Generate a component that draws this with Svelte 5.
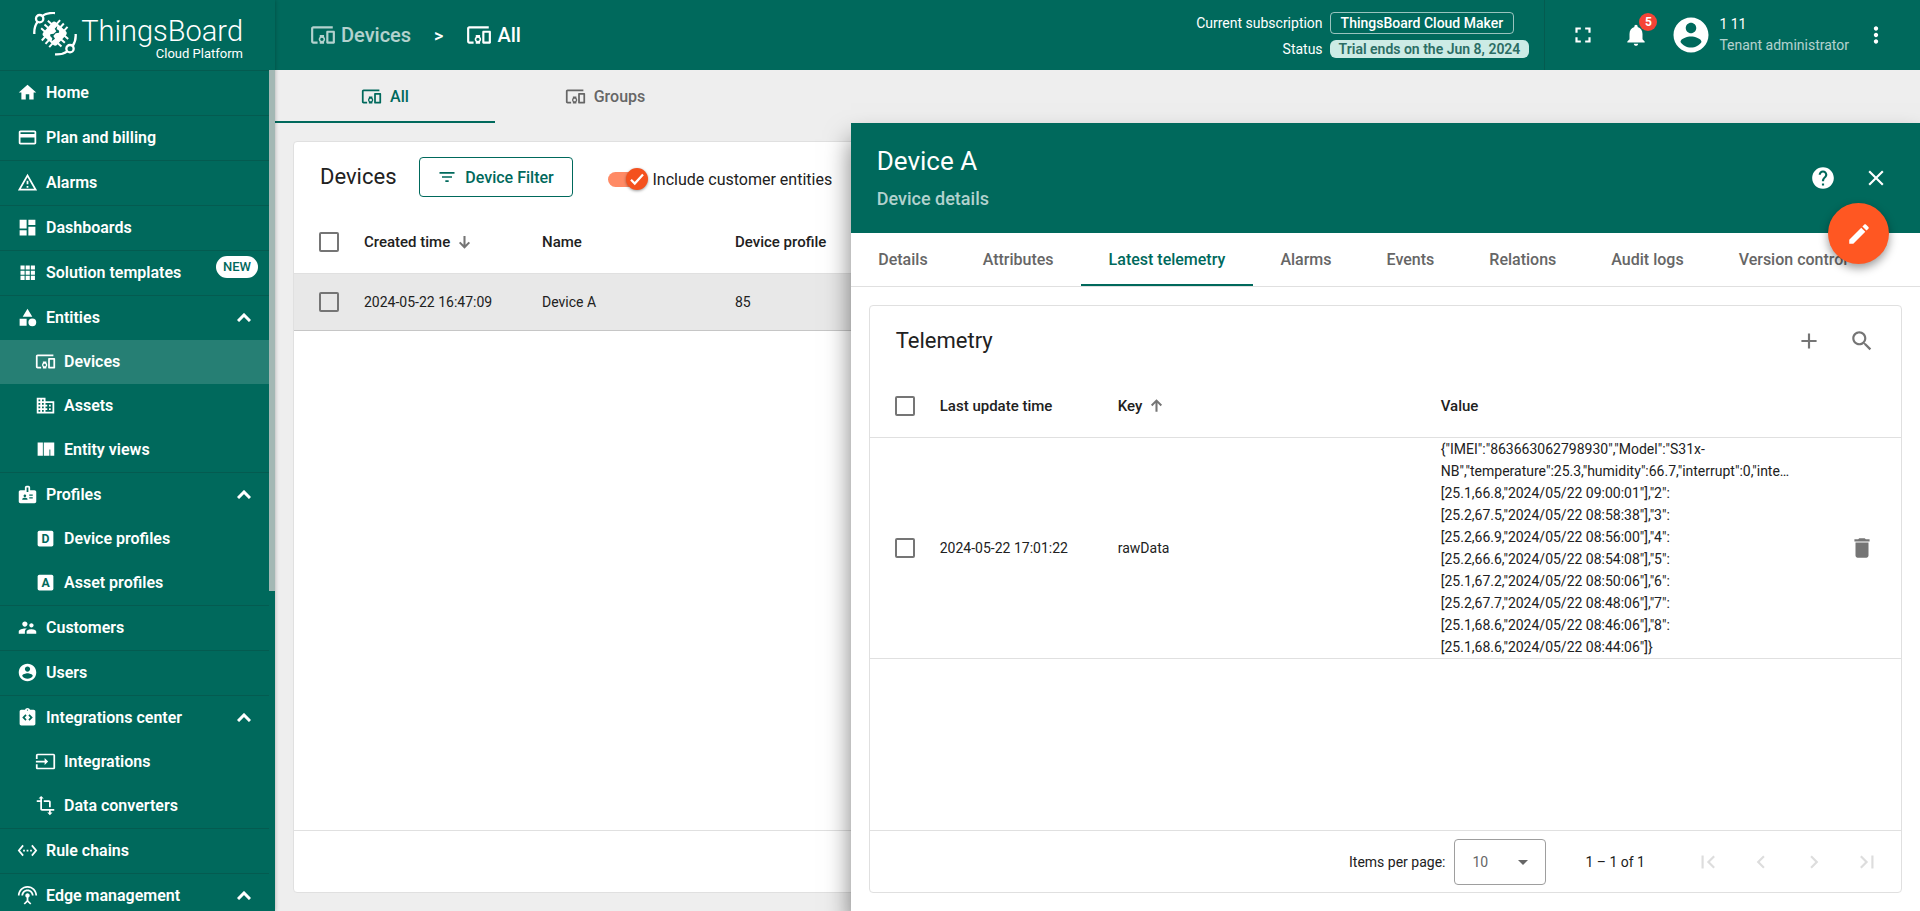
<script>
	const icons = {
		home: 'M10 20v-6h4v6h5v-8h3L12 3 2 12h3v8z',
		card: 'M20 4H4c-1.11 0-1.99.89-1.99 2L2 18c0 1.11.89 2 2 2h16c1.11 0 2-.89 2-2V6c0-1.11-.89-2-2-2zm0 14H4v-6h16v6zm0-10H4V6h16v2z',
		alarm: 'M12 2L1 21h22M12 6l7.53 13H4.47M11 10v4h2v-4m-2 6v2h2v-2',
		dashboard: 'M3 13h8V3H3v10zm0 8h8v-6H3v6zm10 0h8V11h-8v10zm0-18v6h8V3h-8z',
		apps: 'M4 4h4.7v4.7H4zM9.9 4h4.7v4.7H9.9zM15.8 4h4.7v4.7h-4.7zM4 9.9h4.7v4.7H4zM9.9 9.9h4.7v4.7H9.9zM15.8 9.9h4.7v4.7h-4.7zM4 15.8h4.7v4.7H4zM9.9 15.8h4.7v4.7H9.9zM15.8 15.8h4.7v4.7h-4.7z',
		category: 'M12 2l-5.5 9h11zM17.5 13a4.5 4.5 0 1 0 0 9 4.5 4.5 0 0 0 0-9zM3 13.5h8v8H3z',
		devices: 'M3 6h18V4H3c-1.1 0-2 .9-2 2v12c0 1.1.9 2 2 2h4v-2H3V6zm10 6H9v1.78c-.61.55-1 1.33-1 2.22s.39 1.67 1 2.22V20h4v-1.78c.61-.55 1-1.34 1-2.22s-.39-1.67-1-2.22V12zm-2 5.5c-.83 0-1.5-.67-1.5-1.5s.67-1.5 1.5-1.5 1.5.67 1.5 1.5-.67 1.5-1.5 1.5zM22 8h-6c-.5 0-1 .5-1 1v10c0 .5.5 1 1 1h6c.5 0 1-.5 1-1V9c0-.5-.5-1-1-1zm-1 10h-4v-8h4v8z',
		domain: 'M12 7V3H2v18h20V7H12zM6 19H4v-2h2v2zm0-4H4v-2h2v2zm0-4H4V9h2v2zm0-4H4V5h2v2zm4 12H8v-2h2v2zm0-4H8v-2h2v2zm0-4H8V9h2v2zm0-4H8V5h2v2zm10 12h-8v-2h2v-2h-2v-2h2v-2h-2V9h8v10zm-2-8h-2v2h2v-2zm0 4h-2v2h2v-2z',
		views: 'M3 4h6v15H3zM10 4h12v15h-4.500v-7h-1v7H10z',
		badge: 'M20 7h-5V4c0-1.1-.9-2-2-2h-2c-1.1 0-2 .9-2 2v3H4c-1.1 0-2 .9-2 2v11c0 1.1.9 2 2 2h16c1.1 0 2-.9 2-2V9c0-1.1-.9-2-2-2zM9 12c.83 0 1.5.67 1.5 1.5S9.83 15 9 15s-1.5-.67-1.5-1.5S8.17 12 9 12zm3 6H6v-.75c0-1 2-1.5 3-1.5s3 .5 3 1.5V18zm1-9h-2V4h2v5zm5 7.5h-4V15h4v1.5zm0-3h-4V12h4v1.5z',
		customers: 'M16.5 12c1.38 0 2.49-1.12 2.49-2.5S17.88 7 16.5 7C15.12 7 14 8.12 14 9.5s1.12 2.5 2.5 2.5zM9 11c1.66 0 2.99-1.34 2.99-3S10.66 5 9 5C7.34 5 6 6.34 6 8s1.34 3 3 3zm7.5 3c-1.83 0-5.5.92-5.5 2.75V19h11v-2.25c0-1.83-3.67-2.75-5.5-2.75zM9 13c-2.33 0-7 1.17-7 3.5V19h7v-2.25c0-.85.33-2.34 2.37-3.47C10.5 13.1 9.66 13 9 13z',
		account: 'M12 2C6.48 2 2 6.48 2 12s4.48 10 10 10 10-4.48 10-10S17.52 2 12 2zm0 3c1.66 0 3 1.34 3 3s-1.34 3-3 3-3-1.34-3-3 1.34-3 3-3zm0 14.2c-2.5 0-4.71-1.28-6-3.22.03-1.99 4-3.08 6-3.08 1.99 0 5.97 1.09 6 3.08-1.29 1.94-3.5 3.22-6 3.22z',
		integration: 'M19 3h-4.18C14.4 1.84 13.3 1 12 1s-2.4.84-2.82 2H5c-1.1 0-2 .9-2 2v14c0 1.1.9 2 2 2h14c1.1 0 2-.9 2-2V5c0-1.1-.9-2-2-2zm-8 11.17-1.41 1.42L6 12l3.59-3.59L11 9.83 8.83 12 11 14.17zM12 4.25c-.41 0-.75-.34-.75-.75s.34-.75.75-.75.75.34.75.75-.34.75-.75.75zm2.41 11.34L13 14.17 15.17 12 13 9.83l1.41-1.42L18 12l-3.59 3.59z',
		input: 'M21 3.01H3c-1.1 0-2 .9-2 2V9h2V4.99h18v14.03H3V15H1v4.01c0 1.1.9 1.98 2 1.98h18c1.1 0 2-.88 2-1.98v-14c0-1.11-.9-2-2-2zM11 16l4-4-4-4v3H1v2h10v3z',
		transform: 'M22 18v-2H8V4h2L7 1 4 4h2v2H2v2h4v8c0 1.1.9 2 2 2h8v2h-2l3 3 3-3h-2v-2h4zM10 8h6v6h2V8c0-1.1-.9-2-2-2h-6v2z',
		ethernet: 'M7.77 6.76L6.23 5.48.82 12l5.41 6.52 1.54-1.28L3.42 12l4.35-5.24zM7 13h2v-2H7v2zm10-2h-2v2h2v-2zm-6 2h2v-2h-2v2zm6.77-7.52l-1.54 1.28L20.58 12l-4.35 5.24 1.54 1.28L23.18 12l-5.41-6.52z',
		antenna: 'M12 5c-3.87 0-7 3.13-7 7h2c0-2.76 2.24-5 5-5s5 2.24 5 5h2c0-3.87-3.13-7-7-7zm1 9.29c.88-.39 1.5-1.26 1.5-2.29 0-1.38-1.12-2.5-2.5-2.5S9.5 10.62 9.5 12c0 1.02.62 1.9 1.5 2.29v3.3L7.59 21 9 22.41l3-3 3 3L16.41 21 13 17.59v-3.3zM12 1C5.93 1 1 5.93 1 12h2c0-4.97 4.03-9 9-9s9 4.03 9 9h2c0-6.07-4.93-11-11-11z',
		filter: 'M10 18h4v-2h-4v2zM3 6v2h18V6H3zm3 7h12v-2H6v2z',
		fullscreen: 'M7 14H5v5h5v-2H7v-3zm-2-4h2V7h3V5H5v5zm12 7h-3v2h5v-5h-2v3zM14 5v2h3v3h2V5h-5z',
		bell: 'M12 22c1.1 0 2-.9 2-2h-4c0 1.1.89 2 2 2zm6-6v-5c0-3.07-1.64-5.64-4.5-6.32V4c0-.83-.67-1.5-1.5-1.5s-1.5.67-1.5 1.5v.68C7.63 5.36 6 7.92 6 11v5l-2 2v1h16v-1l-2-2z',
		more: 'M12 8c1.1 0 2-.9 2-2s-.9-2-2-2-2 .9-2 2 .9 2 2 2zm0 2c-1.1 0-2 .9-2 2s.9 2 2 2 2-.9 2-2-.9-2-2-2zm0 6c-1.1 0-2 .9-2 2s.9 2 2 2 2-.9 2-2-.9-2-2-2z',
		help: 'M12 2C6.48 2 2 6.48 2 12s4.48 10 10 10 10-4.48 10-10S17.52 2 12 2zm1 17h-2v-2h2v2zm2.07-7.75l-.9.92C13.45 12.9 13 13.5 13 15h-2v-.5c0-1.1.45-2.1 1.17-2.83l1.24-1.26c.37-.36.59-.86.59-1.41 0-1.1-.9-2-2-2s-2 .9-2 2H8c0-2.21 1.79-4 4-4s4 1.79 4 4c0 .88-.36 1.68-.93 2.25z',
		close: 'M19 6.41L17.59 5 12 10.59 6.41 5 5 6.41 10.59 12 5 17.59 6.41 19 12 13.41 17.59 19 19 17.59 13.41 12z',
		edit: 'M3 17.25V21h3.75L17.81 9.94l-3.75-3.75L3 17.25zM20.71 7.04c.39-.39.39-1.02 0-1.41l-2.34-2.34c-.39-.39-1.02-.39-1.41 0l-1.83 1.83 3.75 3.75 1.83-1.83z',
		add: 'M19 13h-6v6h-2v-6H5v-2h6V5h2v6h6v2z',
		search: 'M15.5 14h-.79l-.28-.27C15.41 12.59 16 11.11 16 9.5 16 5.91 13.09 3 9.5 3S3 5.91 3 9.5 5.91 16 9.5 16c1.61 0 3.09-.59 4.23-1.57l.27.28v.79l5 4.99L20.49 19l-4.99-5zm-6 0C7.01 14 5 11.99 5 9.5S7.01 5 9.5 5 14 7.01 14 9.5 11.99 14 9.5 14z',
		trash: 'M6 19c0 1.1.9 2 2 2h8c1.1 0 2-.9 2-2V7H6v12zM19 4h-3.5l-1-1h-5l-1 1H5v2h14V4z',
		first: 'M18.41 16.59L13.82 12l4.59-4.59L17 6l-6 6 6 6zM6 6h2v12H6z',
		prev: 'M15.41 7.41L14 6l-6 6 6 6 1.41-1.41L10.83 12z',
		next: 'M10 6L8.59 7.41 13.17 12l-4.58 4.59L10 18l6-6z',
		last: 'M5.59 7.41L10.18 12l-4.59 4.59L7 18l6-6-6-6zM16 6h2v12h-2z',
		up: 'M12 4l7 7-1.800 1.800-3.900-3.900V20h-2.600V8.900l-3.900 3.900L5 11z',
		down: 'M12 21l7-7-1.800-1.800-3.900 3.900V5h-2.600v11.100l-3.900-3.900L5 14z'
	};

	const menu = [
		{ name: 'Home', icon: 'home' },
		{ name: 'Plan and billing', icon: 'card' },
		{ name: 'Alarms', icon: 'alarm' },
		{ name: 'Dashboards', icon: 'dashboard' },
		{ name: 'Solution templates', icon: 'apps', isNew: true },
		{
			name: 'Entities',
			icon: 'category',
			pages: [
				{ name: 'Devices', icon: 'devices' },
				{ name: 'Assets', icon: 'domain' },
				{ name: 'Entity views', icon: 'views' }
			]
		},
		{
			name: 'Profiles',
			icon: 'badge',
			pages: [
				{ name: 'Device profiles', letter: 'D' },
				{ name: 'Asset profiles', letter: 'A' }
			]
		},
		{ name: 'Customers', icon: 'customers' },
		{ name: 'Users', icon: 'account' },
		{
			name: 'Integrations center',
			icon: 'integration',
			pages: [
				{ name: 'Integrations', icon: 'input' },
				{ name: 'Data converters', icon: 'transform' }
			]
		},
		{ name: 'Rule chains', icon: 'ethernet' },
		{ name: 'Edge management', icon: 'antenna', pages: [] }
	];

	const detailTabs = [
		'Details',
		'Attributes',
		'Latest telemetry',
		'Alarms',
		'Events',
		'Relations',
		'Audit logs',
		'Version control'
	];

	const rawData = [
		'{"IMEI":"863663062798930","Model":"S31x-',
		'NB","temperature":25.3,"humidity":66.7,"interrupt":0,"inte…',
		'[25.1,66.8,"2024/05/22 09:00:01"],"2":',
		'[25.2,67.5,"2024/05/22 08:58:38"],"3":',
		'[25.2,66.9,"2024/05/22 08:56:00"],"4":',
		'[25.2,66.6,"2024/05/22 08:54:08"],"5":',
		'[25.1,67.2,"2024/05/22 08:50:06"],"6":',
		'[25.2,67.7,"2024/05/22 08:48:06"],"7":',
		'[25.1,68.6,"2024/05/22 08:46:06"],"8":',
		'[25.1,68.6,"2024/05/22 08:44:06"]}'
	];

	let activePage = $state('Devices');
	let listTab = $state('All');
	let activeTab = $state('Latest telemetry');
	let includeCustomers = $state(true);
	let pageSize = $state('10');
</script>

<svelte:head>
	<title>ThingsBoard | Devices</title>
</svelte:head>

{#snippet icon(name)}
	<svg class="icon" viewBox="0 0 24 24" aria-hidden="true"><path d={icons[name]} /></svg>
{/snippet}

<div class="app">
	<aside class="sidebar">
		<div class="logo">
			<svg viewBox="0 0 132 132" aria-hidden="true">
				<g fill="none" stroke="#fff" stroke-width="7">
					<circle cx="20" cy="20" r="11" />
					<circle cx="111" cy="110" r="11" />
					<path d="M4 66C3 50 7 38 14 29M28 12C38 5 50 2 66 3" />
					<path d="M128 66c1 16-3 27-9 36M103 118c-10 7-22 10-37 9" />
				</g>
				<g transform="rotate(42 65 65)">
					<path
						d="M50 24v82M65 24v82M80 24v82M24 50h82M24 65h82M24 80h82"
						stroke="#fff"
						stroke-width="6"
					/>
					<rect x="37" y="37" width="56" height="56" rx="9" fill="#fff" />
				</g>
				<path
					d="M73 42l-2 10c6 2 9 5 7 10l-10 2-7 8 5 8-10 8 2-10c-5-3-8-6-6-11l10-2 8-7-5-8z"
					fill="#00695c"
				/>
			</svg>
			<div class="logo-text">
				<span class="brand">ThingsBoard</span>
				<span class="platform">Cloud Platform</span>
			</div>
		</div>

		<div class="menu-scroll">
			<nav class="menu">
				{#each menu as item}
					<div class="menu-section">
						<a class="menu-link" href="#{item.icon}">
							{@render icon(item.icon)}
							<span>{item.name}</span>
							{#if item.isNew}
								<span class="new-badge">NEW</span>
							{/if}
							{#if item.pages}
								<svg class="chevron" viewBox="0 0 14 9" aria-hidden="true">
									<path d="M1 8l6-6 6 6" />
								</svg>
							{/if}
						</a>
						{#each item.pages ?? [] as page}
							<a
								class="menu-link child"
								class:active={activePage === page.name}
								href="#{page.name}"
								onclick={() => (activePage = page.name)}
							>
								{#if page.letter}
									<svg class="icon" viewBox="0 0 24 24" aria-hidden="true">
										<rect x="3" y="3" width="18" height="18" rx="2" />
										<text class="box-letter" x="12" y="17" text-anchor="middle">{page.letter}</text>
									</svg>
								{:else}
									{@render icon(page.icon)}
								{/if}
								<span>{page.name}</span>
							</a>
						{/each}
					</div>
				{/each}
			</nav>
			<div class="scroll-track"><div class="scroll-thumb"></div></div>
		</div>
	</aside>

	<div class="content">
		<header class="topbar">
			<nav class="breadcrumb">
				<a class="crumb muted" href="#devices">{@render icon('devices')}Devices</a>
				<span class="separator">&gt;</span>
				<a class="crumb" href="#all">{@render icon('devices')}All</a>
			</nav>

			<div class="subscription">
				<span>Current subscription</span>
				<a class="plan" href="#plan">ThingsBoard Cloud Maker</a>
				<span>Status</span>
				<span class="trial">Trial ends on the Jun 8, 2024</span>
			</div>

			<div class="user-bar">
				<button class="icon-button" aria-label="Fullscreen">{@render icon('fullscreen')}</button>
				<button class="icon-button" aria-label="Notifications">
					{@render icon('bell')}
					<span class="count">5</span>
				</button>
				<div class="user">
					<span class="avatar">{@render icon('account')}</span>
					<div class="user-info">
						<span>1 11</span>
						<span class="role">Tenant administrator</span>
					</div>
				</div>
				<button class="icon-button more" aria-label="More">{@render icon('more')}</button>
			</div>
		</header>

		<main>
			<div class="list-tabs">
				{#each ['All', 'Groups'] as tab}
					<button class="list-tab" class:active={listTab === tab} onclick={() => (listTab = tab)}>
						{@render icon('devices')}
						{tab}
					</button>
				{/each}
			</div>

			<section class="card devices-card">
				<div class="card-header">
					<h2>Devices</h2>
					<button class="filter-button">{@render icon('filter')}Device Filter</button>
					<label class="toggle">
						<input type="checkbox" role="switch" bind:checked={includeCustomers} />
						<span class="toggle-track">
							<span class="toggle-knob">
								<svg viewBox="0 0 24 24" aria-hidden="true"><path d="M4 13l5 5L20 6" /></svg>
							</span>
						</span>
						Include customer entities
					</label>
				</div>
				<table>
					<colgroup>
						<col class="col-check" />
						<col class="col-time" />
						<col class="col-name" />
						<col />
					</colgroup>
					<thead>
						<tr>
							<th><input type="checkbox" aria-label="Select all devices" /></th>
							<th><span class="sorted">Created time {@render icon('down')}</span></th>
							<th>Name</th>
							<th>Device profile</th>
						</tr>
					</thead>
					<tbody>
						<tr class="current">
							<td><input type="checkbox" aria-label="Select Device A" /></td>
							<td>2024-05-22 16:47:09</td>
							<td>Device A</td>
							<td>85</td>
						</tr>
					</tbody>
				</table>
				<div class="card-footer"></div>
			</section>

			<section class="drawer">
				<header class="drawer-header">
					<div class="drawer-title">
						<h1>Device A</h1>
						<p>Device details</p>
					</div>
					<button class="icon-button" aria-label="Help">{@render icon('help')}</button>
					<button class="icon-button" aria-label="Close">{@render icon('close')}</button>
					<button class="fab" aria-label="Edit">{@render icon('edit')}</button>
				</header>

				<div class="detail-tabs">
					{#each detailTabs as tab}
						<button
							class="detail-tab"
							class:active={activeTab === tab}
							onclick={() => (activeTab = tab)}
						>
							{tab}
						</button>
					{/each}
				</div>

				<div class="card telemetry-card">
					<div class="card-header">
						<h2>Telemetry</h2>
						<div class="actions">
							<button class="icon-button" aria-label="Add">{@render icon('add')}</button>
							<button class="icon-button" aria-label="Search">{@render icon('search')}</button>
						</div>
					</div>
					<table>
						<colgroup>
							<col class="col-check" />
							<col class="col-time" />
							<col class="col-key" />
							<col />
							<col class="col-action" />
						</colgroup>
						<thead>
							<tr>
								<th><input type="checkbox" aria-label="Select all telemetry" /></th>
								<th>Last update time</th>
								<th><span class="sorted">Key {@render icon('up')}</span></th>
								<th>Value</th>
								<th></th>
							</tr>
						</thead>
						<tbody>
							<tr>
								<td><input type="checkbox" aria-label="Select rawData" /></td>
								<td>2024-05-22 17:01:22</td>
								<td>rawData</td>
								<td class="value">
									{#each rawData as line}
										<div>{line}</div>
									{/each}
								</td>
								<td>
									<button class="icon-button" aria-label="Delete">{@render icon('trash')}</button>
								</td>
							</tr>
						</tbody>
					</table>
					<div class="card-footer">
						<label for="page-size">Items per page:</label>
						<span class="page-size">
							<select id="page-size" bind:value={pageSize}>
								<option>10</option>
								<option>20</option>
								<option>30</option>
							</select>
						</span>
						<span class="range">1 – 1 of 1</span>
						<div class="pager">
							{#each ['first', 'prev', 'next', 'last'] as step}
								<button class="icon-button" aria-label="{step} page" disabled>
									{@render icon(step)}
								</button>
							{/each}
						</div>
					</div>
				</div>
			</section>
		</main>
	</div>
</div>

<style>
	:global(body) {
		margin: 0;
		font-family: Roboto, 'Liberation Sans', sans-serif;
		font-size: 14px;
		color: #212121;
	}

	.app {
		display: grid;
		grid-template-columns: 275px 1fr;
		height: 100vh;
		overflow: hidden;
	}

	button,
	select {
		font: inherit;
		color: inherit;
	}

	button {
		padding: 0;
		border: none;
		background: none;
		cursor: pointer;
	}

	a {
		color: inherit;
		text-decoration: none;
	}

	h1,
	h2,
	p {
		margin: 0;
		font-weight: 400;
	}

	.icon {
		display: block;
		flex: none;
		width: 26px;
		height: 26px;
		fill: currentColor;
	}

	/* sidebar */
	.sidebar {
		z-index: 2;
		display: flex;
		flex-direction: column;
		min-height: 0;
		background: #00695c;
		color: white;
		box-shadow: 0 0 4px rgba(0, 0, 0, 0.3);
	}

	.logo {
		display: flex;
		flex: none;
		justify-content: space-between;
		box-sizing: border-box;
		height: 70px;
		padding: 12px 32px 0 33px;
	}

	.logo svg {
		width: 44px;
		height: 44px;
	}

	.logo-text {
		display: flex;
		flex-direction: column;
		align-items: flex-end;
		padding-top: 5px;
	}

	.brand {
		font-size: 29px;
		font-weight: 300;
		line-height: 29px;
	}

	.platform {
		font-size: 13px;
		line-height: 16px;
	}

	.menu-scroll {
		display: flex;
		flex: 1;
		min-height: 0;
	}

	.menu {
		flex: 1;
		overflow: hidden;
	}

	.menu-section {
		border-top: 1px solid #045b50;
	}

	.menu-link {
		display: flex;
		align-items: center;
		box-sizing: border-box;
		height: 44px;
		padding: 0 18px 2px 17px;
		gap: 8px;
		font-size: 16px;
		font-weight: 600;
	}

	.menu-link .icon {
		width: 21px;
		height: 21px;
	}

	.menu-link.child {
		padding-left: 35px;
	}

	.menu-link.active {
		background: #267f74;
	}

	.box-letter {
		fill: #00695c;
		font-size: 14px;
		font-weight: 700;
	}

	.new-badge {
		align-self: flex-start;
		margin: 5px -7px 0 auto;
		padding: 0 7px;
		border-radius: 11px;
		background: white;
		color: #00695c;
		font-size: 13px;
		font-weight: 500;
		line-height: 22px;
	}

	.chevron {
		width: 14px;
		height: 9px;
		margin-left: auto;
		fill: none;
		stroke: white;
		stroke-width: 3;
	}

	.scroll-track {
		width: 6px;
	}

	.scroll-thumb {
		height: 62%;
		background: #a3b8b4;
	}

	/* top bar */
	.content {
		display: flex;
		flex-direction: column;
		min-width: 0;
	}

	.topbar {
		display: flex;
		align-items: stretch;
		height: 70px;
		background: #00695c;
		color: white;
	}

	.breadcrumb {
		display: flex;
		align-items: center;
		margin-right: auto;
		padding-left: 35px;
		gap: 23px;
		font-size: 20px;
	}

	.crumb {
		display: flex;
		align-items: center;
		gap: 5px;
		font-weight: 500;
	}

	.muted {
		opacity: 0.7;
	}

	.separator {
		font-size: 18px;
		font-weight: 500;
	}

	.subscription {
		display: grid;
		grid-template-columns: auto auto;
		align-content: center;
		align-items: center;
		justify-items: end;
		padding: 0 15px 0 0;
		gap: 6px 7px;
	}

	.plan,
	.trial {
		justify-self: start;
		font-weight: 500;
	}

	.plan {
		padding: 0 10px;
		border: 1px solid rgba(255, 255, 255, 0.6);
		border-radius: 4px;
		line-height: 20px;
	}

	.trial {
		padding: 0 9px;
		border-radius: 6px;
		background: #ccebe5;
		color: #2b6d64;
		font-weight: 600;
		line-height: 18px;
	}

	.user-bar {
		display: flex;
		align-items: center;
		padding-right: 31px;
		border-left: 1px solid #045b50;
	}

	.icon-button {
		position: relative;
		display: grid;
		place-items: center;
		width: 53px;
		height: 53px;
	}

	.user-bar > .icon-button:first-child {
		margin-left: 11px;
	}

	.count {
		position: absolute;
		top: 4px;
		left: 30px;
		width: 18px;
		border-radius: 9px;
		background: #f44336;
		font-size: 12px;
		font-weight: 700;
		line-height: 18px;
	}

	.user {
		display: flex;
		align-items: center;
		margin-left: 8px;
		gap: 7px;
	}

	.avatar .icon {
		width: 42px;
		height: 42px;
	}

	.user-info {
		display: flex;
		flex-direction: column;
		line-height: 21px;
	}

	.role {
		opacity: 0.7;
	}

	.more {
		width: 26px;
		margin-left: 14px;
	}

	/* device list */
	main {
		position: relative;
		display: flex;
		flex: 1;
		flex-direction: column;
		min-height: 0;
		overflow: hidden;
		background: #eee;
	}

	.list-tabs {
		display: flex;
		flex: none;
	}

	.list-tab {
		display: flex;
		align-items: center;
		justify-content: center;
		width: 220px;
		height: 53px;
		padding-top: 2px;
		gap: 8px;
		border-bottom: 2px solid transparent;
		color: #666;
		font-size: 16px;
		font-weight: 500;
	}

	.list-tab .icon {
		width: 21px;
		height: 21px;
	}

	.list-tab.active {
		border-bottom-color: #00695c;
		color: #00695c;
	}

	.card {
		display: flex;
		flex: 1;
		flex-direction: column;
		min-height: 0;
		margin: 18px;
		border: 1px solid #e0e0e0;
		border-radius: 4px;
		background: white;
	}

	.card-header {
		display: flex;
		flex: none;
		align-items: center;
		box-sizing: border-box;
		height: 70px;
		padding: 0 13px 0 26px;
	}

	h2 {
		padding-bottom: 2px;
		font-size: 22px;
	}

	.filter-button {
		display: flex;
		align-items: center;
		justify-content: center;
		width: 154px;
		height: 40px;
		margin: 0 35px 0 22px;
		gap: 8px;
		border: 1px solid #00695c;
		border-radius: 4px;
		color: #00695c;
		font-size: 16px;
		font-weight: 500;
	}

	.filter-button .icon {
		width: 20px;
		height: 20px;
	}

	.toggle {
		display: flex;
		align-items: center;
		position: relative;
		padding-top: 4px;
		gap: 13px;
		font-size: 16px;
		cursor: pointer;
	}

	.toggle input {
		position: absolute;
		opacity: 0;
	}

	.toggle-track {
		width: 32px;
		height: 15px;
		border-radius: 8px;
		background: #bdbdbd;
	}

	.toggle-knob {
		display: grid;
		place-items: center;
		width: 22px;
		height: 22px;
		margin-top: -4px;
		border-radius: 50%;
		background: white;
		box-shadow: 0 1px 3px rgba(0, 0, 0, 0.4);
	}

	.toggle-knob svg {
		width: 18px;
		height: 18px;
		fill: none;
		stroke: white;
		stroke-width: 3;
	}

	.toggle input:checked + .toggle-track {
		background: #ff8a65;
	}

	.toggle input:checked + .toggle-track .toggle-knob {
		margin-left: 18px;
		background: #f4511e;
	}

	table {
		width: 100%;
		table-layout: fixed;
		border-collapse: collapse;
	}

	.col-check {
		width: 70px;
	}

	.col-time {
		width: 178px;
	}

	.col-name {
		width: 193px;
	}

	.col-key {
		width: 323px;
	}

	.col-action {
		width: 66px;
	}

	th,
	td {
		height: 56px;
		padding: 0;
		border-bottom: 1px solid #e0e0e0;
		text-align: left;
	}

	th {
		height: 59px;
		padding-bottom: 2px;
		font-size: 15px;
		font-weight: 500;
	}

	.current {
		background: #e8e8e8;
	}

	.current td {
		border-bottom-color: #c6c6c6;
	}

	table input {
		display: block;
		width: 20px;
		height: 20px;
		margin: 0 0 0 25px;
		border: 2px solid #757575;
		border-radius: 2px;
		appearance: none;
	}

	table input:checked {
		background: #00695c;
	}

	.sorted {
		display: flex;
		align-items: center;
		gap: 5px;
	}

	.sorted .icon {
		width: 19px;
		height: 19px;
		color: #757575;
	}

	.card-footer {
		display: flex;
		flex: none;
		align-items: center;
		justify-content: flex-end;
		height: 61px;
		margin-top: auto;
		border-top: 1px solid #e0e0e0;
	}

	/* details drawer */
	.drawer {
		position: absolute;
		top: 53px;
		right: 0;
		bottom: 0;
		display: flex;
		flex-direction: column;
		width: 65%;
		background: white;
		box-shadow: 0 16px 24px rgba(0, 0, 0, 0.5);
	}

	.drawer-header {
		position: relative;
		display: flex;
		flex: none;
		align-items: center;
		height: 110px;
		padding: 0 18px 0 26px;
		background: #00695c;
		color: white;
	}

	.drawer-title {
		margin-right: auto;
		padding-top: 4px;
	}

	h1 {
		font-size: 26px;
		line-height: 38px;
	}

	.drawer-title p {
		color: #b2d2ce;
		font-size: 18px;
		font-weight: 500;
		line-height: 38px;
	}

	.fab {
		position: absolute;
		right: 31px;
		bottom: -31px;
		display: grid;
		place-items: center;
		width: 61px;
		height: 61px;
		border-radius: 50%;
		background: #ff5722;
		box-shadow: 0 4px 10px rgba(0, 0, 0, 0.4);
	}

	.detail-tabs {
		display: flex;
		flex: none;
		padding-right: 45px;
		border-bottom: 1px solid #e0e0e0;
	}

	.detail-tab {
		flex: 1 1 auto;
		height: 53px;
		padding: 2px 20px 0;
		border-bottom: 2px solid transparent;
		color: #666;
		font-size: 16px;
		font-weight: 500;
	}

	.detail-tab.active {
		border-bottom-color: #00695c;
		color: #00695c;
	}

	.telemetry-card .icon-button {
		color: #757575;
	}

	.actions {
		display: flex;
		margin-left: auto;
	}

	.value {
		line-height: 22px;
	}

	.telemetry-card .card-footer {
		padding-right: 8px;
	}

	.page-size {
		position: relative;
		margin: 0 39px 0 9px;
	}

	.page-size::after {
		position: absolute;
		top: 21px;
		right: 18px;
		border: 5px solid transparent;
		border-top-color: #666;
		content: '';
		pointer-events: none;
	}

	select {
		width: 92px;
		height: 46px;
		padding: 0 17px;
		border: 1px solid #9e9e9e;
		border-radius: 4px;
		background: white;
		color: #666;
		appearance: none;
	}

	.pager {
		display: flex;
		margin-left: 36px;
	}

	.telemetry-card .pager .icon-button {
		color: #ddd;
	}
</style>
